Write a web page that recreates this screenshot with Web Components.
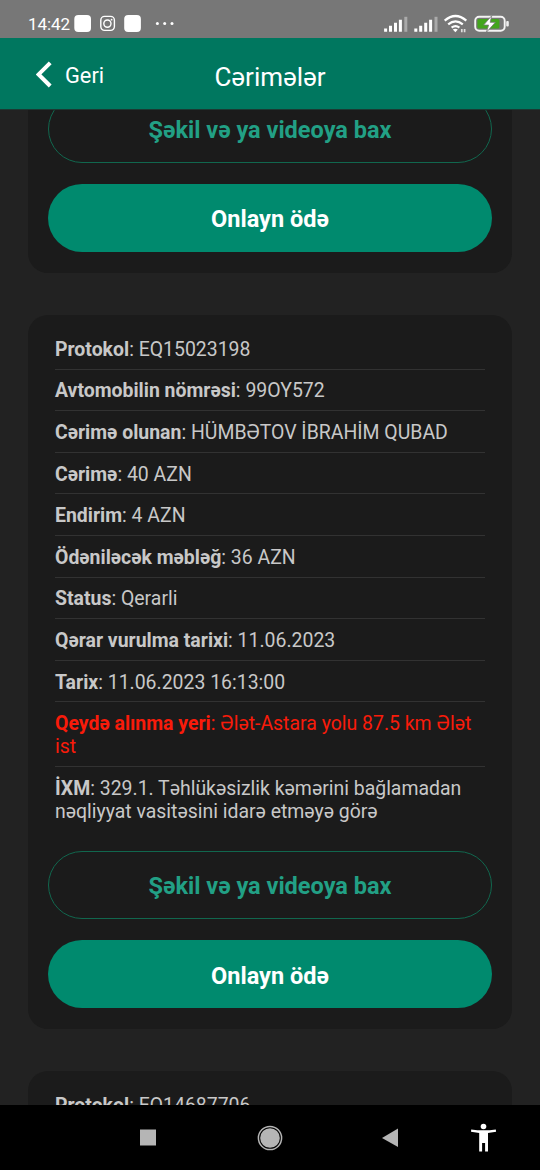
<!DOCTYPE html>
<html lang="az">
<head>
<meta charset="utf-8">
<title>Cərimələr</title>
<style>
html,body{margin:0;background:#222}
body{width:540px;height:1170px;overflow:hidden;font-family:Roboto,"Noto Sans",sans-serif}
</style>
</head>
<body>
<fines-app></fines-app>
<script>
const define = (name, html) => customElements.define(name, class extends HTMLElement {
  constructor() {
    super();
    this.attachShadow({ mode: 'open' }).innerHTML = html;
  }
});

define('status-bar', `
<style>
:host{display:flex;height:38px;background:#777;color:#fff;box-sizing:border-box;padding:9px 30px 0 28px;justify-content:space-between}
.l{display:flex}
time{font-size:17px;line-height:30px;height:28px;letter-spacing:-.05px;width:46px;white-space:nowrap}
svg{display:block}
</style>
<div class="l"><time>14:42</time>
<svg width="102" height="29" viewBox="74 9 102 29" fill="#fff">
<rect x="74.3" y="15" width="16.7" height="17" rx="4"/>
<rect x="124.2" y="15" width="16.7" height="17" rx="4"/>
<g fill="none" stroke="#fff" stroke-width="1.4"><rect x="100.8" y="16.4" width="13.6" height="14" rx="3.8"/><circle cx="107.4" cy="23.6" r="3.6"/></g>
<circle cx="111.6" cy="19.7" r=".9"/>
<circle cx="157.4" cy="23.6" r="1.5"/><circle cx="164.7" cy="23.6" r="1.5"/><circle cx="172" cy="23.6" r="1.5"/>
</svg></div>
<svg width="128" height="29" viewBox="382 9 128 29">
<defs><g id="s" stroke="#fff" stroke-width="3"><path d="M385.6 28.6v3.2M390.5 25.8v6M395.5 22.8v9M400.4 19.8v12" /><path d="M405.8 16.8v15" stroke="#aaa"/></g></defs>
<use href="#s"/><use href="#s" x="30.2"/>
<g fill="none" stroke="#fff" stroke-width="2.2"><path d="M444.7 20.7q10.8-9.4 21.6 0M448.2 24.4q7.3-6 14.6 0M451.6 27.7q3.9-3 7.8 0"/></g>
<path d="M452.8 29.6q2.6-1.8 5 0l-2.4 2.6z" fill="#fff"/>
<path d="M461.8 29v3.2M464.6 29v3.2" stroke="#ddd" stroke-width="1.7"/>
<rect x="475.2" y="16.8" width="29.5" height="14" rx="4" fill="none" stroke="#f4f4f4" stroke-width="1.9"/>
<rect x="477.4" y="19" width="22" height="9.6" rx="1.5" fill="#43a51d"/>
<rect x="506.2" y="21" width="2.6" height="5.6" rx="1" fill="#eee"/>
<path d="M491.8 15.6l-8.2 9.5h5l-2.2 7.2 9-10h-5.2z" fill="#fff" stroke="#777" stroke-width=".8"/>
</svg>`);

define('app-header', `
<style>
:host{display:grid;grid-template-columns:1fr auto 1fr;align-items:center;height:71px;background:#00775f;color:#fff;box-shadow:0 1px 0 #1b3a33;box-sizing:border-box;position:relative;z-index:1}
.b{display:flex;align-items:center;padding-left:36px;gap:13px;font-size:21.8px;padding-top:4px}
svg{display:block;margin-top:-3px}
h1{margin:0;font-size:26px;font-weight:400;line-height:28px;padding-top:6px}
</style>
<div class="b"><svg width="16" height="27" viewBox="0 0 16 27"><path d="M14.2 1.8L2.6 13.4L14.2 25" fill="none" stroke="#fff" stroke-width="4"/></svg><slot name="back"></slot></div>
<h1><slot></slot></h1>`);

define('fine-card', `
<style>
:host{display:block;flex:none;width:484px;box-sizing:border-box;border-radius:20px;background:#1b1b1b;padding:13px 20px 21px}
.f{padding:0 7px}
.a{display:flex;flex-direction:column;gap:21px;margin-top:19px}
</style>
<div class="f"><slot></slot></div><div class="a"><slot name="actions"></slot></div>`);

define('fine-row', `
<style>
:host{display:block;font-size:19.45px;line-height:23.3px;padding:9.8px 0 7.5px;border-bottom:1px solid #323232;color:#c8c8c8;height:23.3px}
:host([tall]){height:46.6px}
:host([last]){border-bottom-color:transparent}
:host([alert]){color:#f91b0a}
b{font-weight:700}
</style><b><slot name="k"></slot></b>: <slot></slot>`);

define('pill-button', `
<style>
:host{display:flex;align-items:center;justify-content:center;height:68.2px;border-radius:34px;box-sizing:border-box;background:#008a6e;color:#fff;font-size:23.5px;font-weight:700;padding-top:3px}
:host([outline]){background:none;border:1px solid #11674e;color:#22a085;padding-top:2px}
</style><slot></slot>`);

define('nav-bar', `
<style>
:host{display:block;height:65px;background:#000;position:relative;z-index:1}
svg{display:block}
</style>
<svg width="540" height="65" viewBox="0 1105 540 65" fill="#b5b5b5">
<path d="M140 1129.5h16v16h-16z"/>
<circle cx="270" cy="1138" r="9.8"/><circle cx="270" cy="1138" r="11.6" fill="none" stroke="#b5b5b5" stroke-width="1.5"/>
<path d="M382 1138l16-9.6v18.7z"/>
<g fill="#fff"><circle cx="483.5" cy="1126.5" r="2.8"/><path d="M471.2 1129.4q12.3 1.8 24.6 0l.3 2.3-8.1 1.2v18.5h-2.9v-8.3h-3v8.3h-2.9v-18.5l-8.2-1.2z"/></g>
</svg>`);

const row = (k, v, attr = '') => `<fine-row ${attr}><span slot="k">${k}</span>${v}</fine-row>`;
const actions = `<pill-button slot="actions" outline>Şəkil və ya videoya bax</pill-button><pill-button slot="actions">Onlayn ödə</pill-button>`;

define('fines-app', `
<style>
:host{display:flex;flex-direction:column;width:540px;height:1170px;overflow:hidden;background:#222}
main{flex:1;min-height:0;overflow:hidden;display:flex;flex-direction:column;align-items:center;gap:42px}
.first{margin-top:-46.4px}
</style>
<status-bar></status-bar>
<app-header><span slot="back">Geri</span>Cərimələr</app-header>
<main>
<fine-card class="first">${actions}</fine-card>
<fine-card>
${row('Protokol', 'EQ15023198')}
${row('Avtomobilin nömrəsi', '99OY572')}
${row('Cərimə olunan', 'HÜMBƏTOV İBRAHİM QUBAD')}
${row('Cərimə', '40 AZN')}
${row('Endirim', '4 AZN')}
${row('Ödəniləcək məbləğ', '36 AZN')}
${row('Status', 'Qerarli')}
${row('Qərar vurulma tarixi', '11.06.2023')}
${row('Tarix', '11.06.2023 16:13:00')}
${row('Qeydə alınma yeri', 'Ələt-Astara yolu 87.5 km Ələt ist', 'alert tall')}
${row('İXM', '329.1. Təhlükəsizlik kəmərini bağlamadan nəqliyyat vasitəsini idarə etməyə görə', 'tall last')}
${actions}
</fine-card>
<fine-card>
${row('Protokol', 'EQ14687706')}
</fine-card>
</main>
<nav-bar></nav-bar>`);
</script>
</body>
</html>
